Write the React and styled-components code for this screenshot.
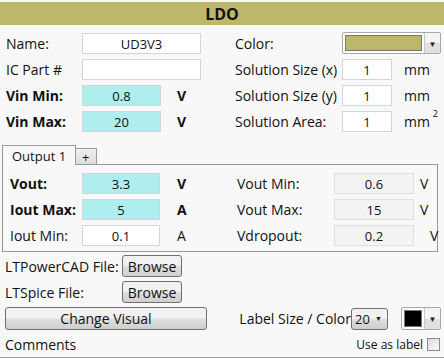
import React from "react";
import styled, { createGlobalStyle } from "styled-components";

const Global = createGlobalStyle`
  body {
    margin: 0;
    background: #f8f8f8;
    font-family: "Open Sans", "Liberation Sans", sans-serif;
    font-size: 14px;
    color: #111;
  }
`;

export default function App() {
  return (
    <Page>
      <Global />
      <Header>LDO</Header>

      <Top>
        <Column>
          <Row>
            <Label width={76}>Name:</Label>
            <Input width={119} defaultValue="UD3V3" />
          </Row>
          <Row>
            <Label width={76}>IC Part #</Label>
            <Input width={119} defaultValue="" />
          </Row>
          <Row>
            <Label width={76} bold>Vin Min:</Label>
            <Input width={79} cyan defaultValue="0.8" />
            <Unit bold left={16}>V</Unit>
          </Row>
          <Row>
            <Label width={76} bold>Vin Max:</Label>
            <Input width={79} cyan defaultValue="20" />
            <Unit bold left={16}>V</Unit>
          </Row>
        </Column>

        <Column>
          <Row>
            <Label width={107}>Color:</Label>
            <ColorSelect>
              <Swatch color="#bdb76b" />
              <Caret>▼</Caret>
            </ColorSelect>
          </Row>
          <Row>
            <Label width={107}>Solution Size (x)</Label>
            <Input width={50} defaultValue="1" />
            <Unit left={12}>mm</Unit>
          </Row>
          <Row>
            <Label width={107}>Solution Size (y)</Label>
            <Input width={50} defaultValue="1" />
            <Unit left={12}>mm</Unit>
          </Row>
          <Row>
            <Label width={107}>Solution Area:</Label>
            <Input width={50} defaultValue="1" />
            <Unit left={12}>
              mm<Sup>2</Sup>
            </Unit>
          </Row>
        </Column>
      </Top>

      <Tabs>
        <Tab active>Output 1</Tab>
        <Tab>+</Tab>
      </Tabs>
      <Panel>
        <PanelColumn>
          <Row>
            <Label width={72} bold>Vout:</Label>
            <Input width={78} cyan defaultValue="3.3" />
            <Unit bold left={17}>V</Unit>
          </Row>
          <Row>
            <Label width={72} bold>Iout Max:</Label>
            <Input width={78} cyan defaultValue="5" />
            <Unit bold left={17}>A</Unit>
          </Row>
          <Row>
            <Label width={72}>Iout Min:</Label>
            <Input width={78} defaultValue="0.1" />
            <Unit left={17}>A</Unit>
          </Row>
        </PanelColumn>
        <PanelColumn>
          <Row>
            <Label width={97}>Vout Min:</Label>
            <Input width={80} readOnly defaultValue="0.6" />
            <Unit left={6}>V</Unit>
          </Row>
          <Row>
            <Label width={97}>Vout Max:</Label>
            <Input width={80} readOnly defaultValue="15" />
            <Unit left={6}>V</Unit>
          </Row>
          <Row>
            <Label width={97}>Vdropout:</Label>
            <Input width={80} readOnly defaultValue="0.2" />
            <Unit left={16}>V</Unit>
          </Row>
        </PanelColumn>
      </Panel>

      <Bottom>
        <Row>
          <Label width={117}>LTPowerCAD File:</Label>
          <Button>Browse</Button>
        </Row>
        <Row>
          <Label width={117}>LTSpice File:</Label>
          <Button>Browse</Button>
        </Row>
        <SplitRow>
          <WideButton>Change Visual</WideButton>
          <LabelStyle>
            <span>Label Size / Color</span>
            <SizeSelect>
              20 <small>▼</small>
            </SizeSelect>
            <ColorPick>
              <Swatch color="#000" />
              <Caret>▼</Caret>
            </ColorPick>
          </LabelStyle>
        </SplitRow>
        <CommentRow>
          <span>Comments</span>
          <UseLabel>
            Use as label <Check />
          </UseLabel>
        </CommentRow>
      </Bottom>
    </Page>
  );
}

const Page = styled.div`
  width: 444px;
  height: 358px;
  padding-top: 2px;
  box-sizing: border-box;
`;

const Header = styled.div`
  height: 23px;
  background: #bdb76b;
  display: flex;
  align-items: center;
  justify-content: center;
  font-weight: 700;
  font-size: 16px;
  color: #111;
`;

const Top = styled.div`
  display: flex;
  padding: 5px 0 0 6px;
`;

const Column = styled.div`
  width: 229px;
  flex-shrink: 0;
  display: flex;
  flex-direction: column;
`;

const Row = styled.div`
  height: 26px;
  display: flex;
  align-items: center;
`;

const Label = styled.span`
  width: ${(p) => p.width}px;
  flex-shrink: 0;
  font-weight: ${(p) => (p.bold ? 700 : 400)};
  white-space: nowrap;
`;

const Input = styled.input`
  width: ${(p) => p.width}px;
  height: 21px;
  flex-shrink: 0;
  box-sizing: border-box;
  border: 1px solid ${(p) => (p.readOnly ? "#dedede" : "#d2d6dc")};
  background: ${(p) => (p.cyan ? "#afeeee" : p.readOnly ? "#f3f3f3" : "#fff")};
  font-family: "Open Sans", "Liberation Sans", sans-serif;
  font-size: 13px;
  text-align: center;
  color: #111;
  padding: 2px 0 0;
  outline: none;
`;

const Unit = styled.span`
  margin-left: ${(p) => p.left}px;
  font-weight: ${(p) => (p.bold ? 700 : 400)};
  position: relative;
  white-space: nowrap;
`;

const Sup = styled.sup`
  font-size: 9px;
  position: absolute;
  top: -5px;
  right: -8px;
`;

const ColorSelect = styled.div`
  width: 99px;
  height: 22px;
  flex-shrink: 0;
  box-sizing: border-box;
  display: flex;
  border: 1px solid #a9a9a9;
  border-radius: 2px;
  background: #fff;
`;

const Swatch = styled.div`
  flex: 1;
  margin: 2px;
  background: ${(p) => p.color};
  border: 1px solid #777;
`;

const Caret = styled.div`
  width: 15px;
  border-left: 1px solid #c8c8c8;
  background: linear-gradient(#f4f4f4 50%, #e0e0e0 50%);
  font-size: 8px;
  display: flex;
  align-items: center;
  justify-content: center;
  color: #222;
`;

const Tabs = styled.div`
  display: flex;
  align-items: flex-end;
  margin: 11px 0 0 2px;
  height: 19px;
`;

const Tab = styled.div`
  height: ${(p) => (p.active ? 20 : 17)}px;
  margin-bottom: -1px;
  box-sizing: border-box;
  padding: 0 ${(p) => (p.active ? 9 : 6)}px;
  border: 1px solid #999;
  border-bottom: ${(p) => (p.active ? "none" : "1px solid #999")};
  border-left: ${(p) => (p.active ? "1px solid #999" : "none")};
  background: ${(p) => (p.active ? "#f8f8f8" : "linear-gradient(#f0f0f0, #dcdcdc)")};
  font-size: 13px;
  display: flex;
  align-items: center;
  position: relative;
  z-index: 1;
`;

const Panel = styled.div`
  margin-left: 2px;
  width: 436px;
  height: 88px;
  box-sizing: border-box;
  border: 1px solid #999;
  display: flex;
  padding: 5px 0 0 7px;
`;

const PanelColumn = styled.div`
  width: 227px;
  flex-shrink: 0;
  display: flex;
  flex-direction: column;

  & + & {
    width: 200px;
  }
`;

const Bottom = styled.div`
  padding: 1px 0 0 5px;
  border-bottom: 1px solid #a0a0a0;
`;

const Button = styled.button`
  height: 22px;
  width: 60px;
  flex-shrink: 0;
  border: 1px solid #707070;
  border-radius: 3px;
  background: linear-gradient(#f2f2f2 45%, #dddddd 55%, #cfcfcf);
  font-family: "Open Sans", "Liberation Sans", sans-serif;
  font-size: 14px;
  color: #111;
  padding: 0;
`;

const WideButton = styled(Button)`
  width: 202px;
  height: 23px;
`;

const SplitRow = styled(Row)`
  height: 27px;
  justify-content: space-between;
  padding-right: 3px;
`;

const LabelStyle = styled.div`
  display: flex;
  align-items: center;
`;

const SizeSelect = styled.div`
  width: 37px;
  height: 22px;
  box-sizing: border-box;
  border: 1px solid #707070;
  border-radius: 3px;
  background: linear-gradient(#f2f2f2 45%, #dddddd 55%, #cfcfcf);
  font-size: 13px;
  display: flex;
  align-items: center;
  justify-content: space-between;
  padding: 0 5px 0 3px;
  margin: 0 13px 0 0;

  small {
    font-size: 7px;
  }
`;

const ColorPick = styled(ColorSelect)`
  width: 40px;
  height: 23px;
`;

const CommentRow = styled.div`
  height: 25px;
  display: flex;
  align-items: center;
  justify-content: space-between;
  padding-right: 4px;
`;

const UseLabel = styled.label`
  display: flex;
  align-items: center;
  gap: 4px;
  font-size: 12px;
`;

const Check = styled.span`
  width: 11px;
  height: 11px;
  border: 1px solid #8a8a8a;
  background: linear-gradient(135deg, #dcdcdc, #fafafa);
`;
